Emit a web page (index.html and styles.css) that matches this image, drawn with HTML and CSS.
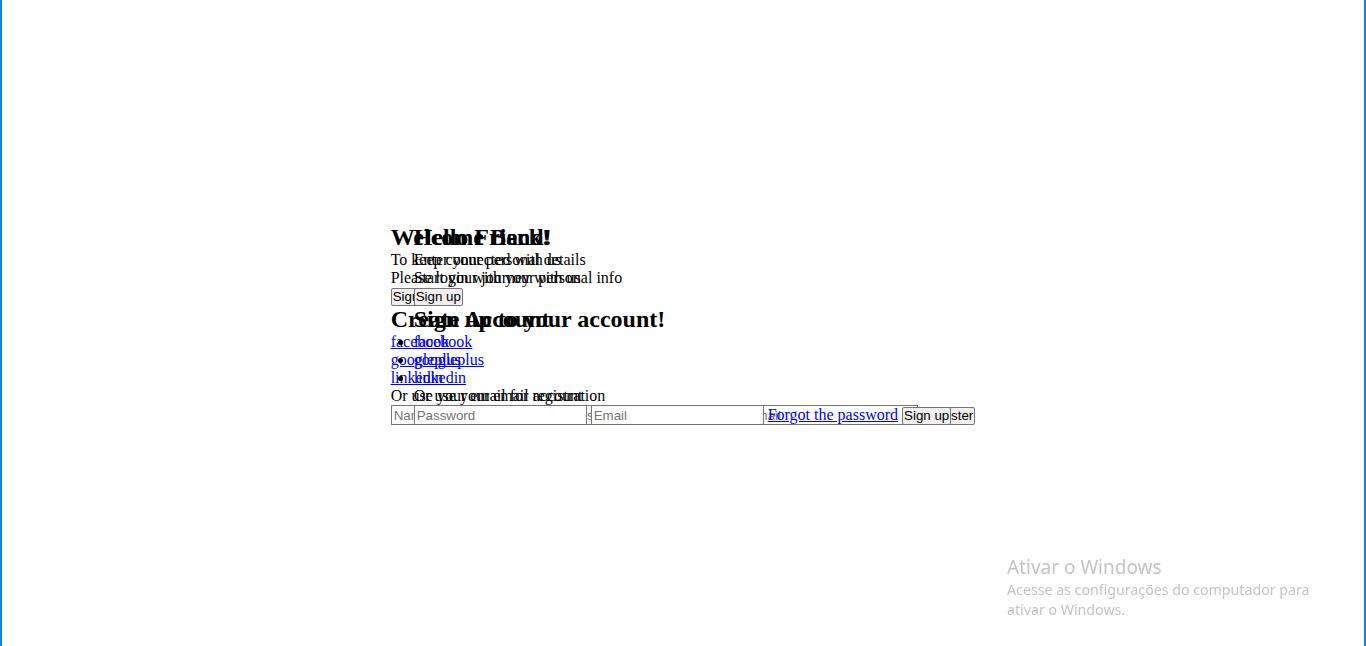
FILE: index.html
```html
<!DOCTYPE html>
<html lang="en">
<head>
<meta charset="utf-8">
<title>Login</title>
<link rel="stylesheet" href="styles.css">
</head>
<body>
<div class="stack">
  <div class="panel panel-a">
    <h2>Welcome Back!</h2>
    <p>To keep connected with us</p>
    <p>Please login with your personal info</p>
    <button class="btn">Sign in</button>
    <h2>Create Account</h2>
    <ul class="social social-a">
      <li><a href="#">facebook</a></li>
      <li><a href="#">googleplus</a></li>
      <li><a href="#">linkedin</a></li>
    </ul>
    <p>Or use your email for registration</p>
    <div class="row"><input class="field" type="text" placeholder="Name"> <input class="field" type="password" placeholder="Password"> <input class="field" type="email" placeholder="Email"> <button class="btn">Register</button></div>
  </div>
  <div class="panel panel-b">
    <h2>Hello Friend!</h2>
    <p>Enter your personal details</p>
    <p>Start your journey with us</p>
    <button class="btn">Sign up</button>
    <h2>Sign up to your account!</h2>
    <ul class="social social-b">
      <li><a href="#">facebook</a></li>
      <li><a href="#">googleplus</a></li>
      <li><a href="#">linkedin</a></li>
    </ul>
    <p>Or use your email account</p>
    <div class="row"><input class="field" type="password" placeholder="Password"> <input class="field" type="email" placeholder="Email"> <a href="#">Forgot the password</a> <button class="btn">Sign up</button></div>
  </div>
</div>
<div class="activate">
  <div class="activate-title">Ativar o Windows</div>
  <div class="activate-text">Acesse as configurações do computador para<br>ativar o Windows.</div>
</div>
</body>
</html>
```
FILE: styles.css
```css
html, body {
  margin: 0;
  padding: 0;
}
body {
  box-sizing: border-box;
  height: 100vh;
  border-left: 2px solid #0c84e4;
  border-right: 2px solid #0c84e4;
  display: flex;
  align-items: center;
  justify-content: center;
  font-family: "Liberation Serif", "Times New Roman", serif;
  font-size: 16px;
  color: #000;
  background: #fff;
}
.stack {
  display: grid;
  margin-top: 3px;
}
.panel {
  grid-area: 1 / 1;
  white-space: nowrap;
}
.panel-b {
  margin-left: 23px;
}
h2 {
  margin: 0;
  font-size: 24px;
  font-weight: bold;
}
p {
  margin: 0;
}
a {
  color: #0000ee;
  text-decoration: underline;
}
.social {
  margin: 0;
  padding: 0;
}
.social-a {
  list-style: none;
}
.social-b {
  list-style: disc outside;
}
.btn {
  font-family: "Liberation Sans", Arial, sans-serif;
  font-size: 13.333px;
  line-height: 14px;
  padding: 1px 1px;
  margin: 0;
  border: 1px solid #767676;
  border-radius: 2px;
  background: #efefef;
  color: #000;
}
.row {
  white-space: nowrap;
}
.field {
  box-sizing: border-box;
  width: 173px;
  height: 20px;
  margin: 0;
  padding: 1px 2px;
  border: 1px solid #767676;
  border-radius: 0;
  background: #fff;
  font-family: "Liberation Sans", Arial, sans-serif;
  font-size: 13.333px;
}
.field::placeholder {
  color: #757575;
}
.activate {
  position: fixed;
  left: 1007px;
  top: 554px;
  color: #c4c4c4;
  font-family: "Noto Sans", "Open Sans", sans-serif;
}
.activate-title {
  font-size: 19px;
  line-height: 26px;
}
.activate-text {
  font-size: 14.2px;
  line-height: 20px;
}
```
